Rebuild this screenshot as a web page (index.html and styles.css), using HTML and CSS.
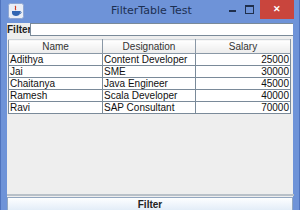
FILE: index.html
```html
<!DOCTYPE html>
<html lang="en">
<head>
  <meta charset="UTF-8" />
  <title>FilterTable Test</title>
  <link rel="stylesheet" href="styles.css">
</head>
<body>

  <div class="window">
    <div class="titlebar">
      <div class="app-icon">
        <svg width="16" height="16" viewBox="0 0 16 16">
          <rect x="0.5" y="0.5" width="15" height="15" rx="2" fill="#e9eef7" stroke="#8ea6d2"/>
          <path d="M7 3 C9 4.5 6 5.5 8 7" stroke="#d23c1e" stroke-width="1.2" fill="none"/>
          <path d="M4 8 h8 v2 c0 2 -2 3 -4 3 c-2 0 -4 -1 -4 -3 z" fill="#3266b2"/>
          <path d="M12 8.5 c1.5 0 1.5 2 0 2" stroke="#3266b2" fill="none"/>
        </svg>
      </div>
      <div class="title">FilterTable Test</div>
      <div class="controls">
        <span class="min"></span>
        <span class="max"></span>
        <span class="close">&#x2715;</span>
      </div>
    </div>

    <div class="content">
      <div class="filter-row">
        <label class="filter-label">Filter</label>
        <div class="filter-input"></div>
      </div>

      <table class="grid">
        <thead>
          <tr><th class="c-name">Name</th><th class="c-desig">Designation</th><th class="c-sal">Salary</th></tr>
        </thead>
        <tbody>
          <tr><td>Adithya</td><td>Content Developer</td><td class="num">25000</td></tr>
          <tr><td>Jai</td><td>SME</td><td class="num">30000</td></tr>
          <tr><td>Chaitanya</td><td>Java Engineer</td><td class="num">45000</td></tr>
          <tr><td>Ramesh</td><td>Scala Developer</td><td class="num">40000</td></tr>
          <tr><td>Ravi</td><td>SAP Consultant</td><td class="num">70000</td></tr>
        </tbody>
      </table>

      <div class="spacer"></div>

      <button class="filter-btn">Filter</button>
    </div>
  </div>

</body>
</html>
```

FILE: styles.css
```css
html, body {
  margin: 0;
  padding: 0;
  width: 300px;
  height: 210px;
  overflow: hidden;
  font-family: "Liberation Sans", Arial, sans-serif;
}
.window {
  display: flex;
  flex-direction: column;
  height: 210px;
  background: #6e93d8;
  padding: 0 6px 0 6px;
  box-sizing: border-box;
  border-left: 1px solid #4f73bd;
  border-right: 1px solid #4f73bd;
}
.titlebar {
  height: 22px;
  display: flex;
  align-items: center;
  flex: none;
}
.app-icon {
  width: 16px;
  height: 16px;
  margin-left: 1px;
}
.title {
  flex: 1;
  text-align: center;
  font-family: "DejaVu Sans", sans-serif;
  font-size: 11px;
  color: #1c2f52;
  padding-left: 50px;
  padding-bottom: 1px;
}
.controls {
  display: flex;
  align-items: flex-start;
  align-self: flex-start;
  height: 19px;
  margin-right: -1px;
}
.min {
  width: 7px;
  height: 2px;
  background: #1f2f4c;
  margin: 10px 9px 0 0;
}
.max {
  width: 7px;
  height: 6px;
  border: 1px solid #1f2f4c;
  border-top-width: 2px;
  margin: 5px 6px 0 0;
}
.close {
  width: 34px;
  height: 19px;
  background: #c9453d;
  color: #fff;
  font-size: 9px;
  font-weight: bold;
  text-align: center;
  line-height: 19px;
}
.content {
  flex: 1;
  display: flex;
  flex-direction: column;
  background: #eeeeee;
  margin-top: 1px;
}
.filter-row {
  display: flex;
  height: 13px;
}
.filter-label {
  font-size: 10px;
  font-weight: bold;
  color: #222;
  line-height: 13px;
  padding: 0 1px 0 0;
  width: 22px;
}
.filter-input {
  flex: 1;
  background: #fff;
  border: 1px solid #7a8a99;
  border-right: none;
  box-sizing: border-box;
}
.grid {
  margin: 3px 4px 0 1px;
  border-collapse: collapse;
  font-size: 10px;
  color: #111;
  table-layout: fixed;
  width: 283px;
  background: #fff;
}
.grid th {
  height: 13px;
  padding: 0;
  font-weight: normal;
  color: #333;
  background: linear-gradient(#ffffff, #ececec);
  border: 1px solid #8a98a6;
  border-top-color: #cdd3d9;
}
.c-name { width: 93px; }
.c-desig { width: 92px; }
.grid td {
  height: 11px;
  line-height: 11px;
  padding: 0 0 0 1px;
  border: 1px solid #7a8a99;
  white-space: nowrap;
  overflow: hidden;
}
.grid td.num {
  text-align: right;
  padding: 0 1px 0 0;
}
.spacer {
  flex: 1;
  border-bottom: 2px solid #b8c0c8;
  margin: 0 -1px 0 0;
}
.filter-btn {
  flex: none;
  height: 13px;
  margin: 1px 0 0 0;
  padding: 0;
  border: 1px solid #93a7c0;
  border-bottom: none;
  background: linear-gradient(#fdfeff, #e3edf8);
  font-family: "Liberation Sans", Arial, sans-serif;
  font-size: 10px;
  font-weight: bold;
  color: #222;
  line-height: 14px;
}
```
